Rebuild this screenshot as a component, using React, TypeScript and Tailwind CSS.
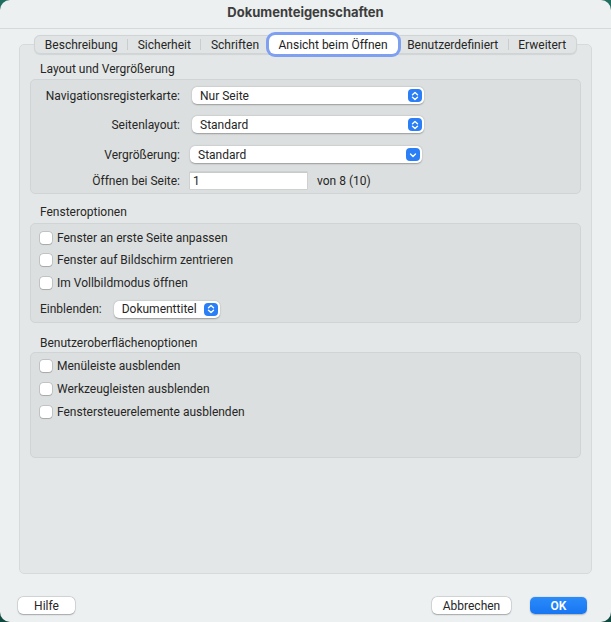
import React from "react";

const TABS = ["Beschreibung", "Sicherheit", "Schriften", "Ansicht beim Öffnen", "Benutzerdefiniert", "Erweitert"];
const ACTIVE = 3;

function UpDown() {
    return (
        <svg width="8" height="10" viewBox="0 0 8 10" fill="none" stroke="white" strokeWidth="1.4" strokeLinecap="round" strokeLinejoin="round">
            <path d="M1.5 3.8 L4 1.5 L6.5 3.8" />
            <path d="M1.5 6.2 L4 8.5 L6.5 6.2" />
        </svg>
    );
}

function Down() {
    return (
        <svg width="8" height="8" viewBox="0 0 8 8" fill="none" stroke="white" strokeWidth="1.4" strokeLinecap="round" strokeLinejoin="round">
            <path d="M1.5 3 L4 5.5 L6.5 3" />
        </svg>
    );
}

function Popup({ value, className, single }: { value: string; className: string; single?: boolean }) {
    return (
        <div className={`flex items-center justify-between h-[17px] bg-white rounded-[5px] shadow-[0_0.5px_1.5px_rgba(0,0,0,0.3)] pl-[8px] pr-[2px] ${className}`}>
            <span className="leading-none">{value}</span>
            <span className="w-[14px] h-[13px] rounded-[4px] bg-[#2a7ef6] flex items-center justify-center">
                {single ? <Down /> : <UpDown />}
            </span>
        </div>
    );
}

function Check({ label, className = "" }: { label: string; className?: string }) {
    return (
        <div className={`flex items-center h-[16px] ${className}`}>
            <span className="w-[12px] h-[12px] rounded-[3px] bg-white shadow-[0_0_0_0.5px_rgba(0,0,0,0.22),0_0.5px_1px_rgba(0,0,0,0.15)]" />
            <span className="ml-[5px]">{label}</span>
        </div>
    );
}

function SectionLabel({ text, className }: { text: string; className: string }) {
    return <div className={`h-[16px] leading-[16px] pl-[10px] ${className}`}>{text}</div>;
}

export default function App() {
    return (
        <div className="w-[611px] h-[622px] bg-gradient-to-b from-[#1f6e60] to-[#0f4a40] text-[12px] text-[#262626]" style={{ fontFamily: "Roboto, 'Noto Sans', sans-serif" }}>
            <div className="w-full h-full rounded-[10px] bg-[#ecf0f0] flex flex-col overflow-hidden">
                {/* title bar */}
                <div className="h-[29px] shrink-0 border-b border-[#d5d9d9] flex items-center justify-center pb-[2px] text-[13px] font-bold text-[#3d3d3d]" style={{ fontFamily: "Inter, sans-serif" }}>
                    Dokumenteigenschaften
                </div>

                <div className="flex flex-col items-center mt-[6px]">
                    {/* tab bar */}
                    <div className="relative z-10 flex items-center h-[19px] bg-[#e1e4e4] border border-[#d0d4d4] rounded-[6px] shadow-[0_0.5px_1px_rgba(0,0,0,0.08)]">
                        {TABS.map((t, i) => {
                            const showSep = i > 0 && i !== ACTIVE && i - 1 !== ACTIVE;
                            return (
                                <React.Fragment key={t}>
                                    {showSep && <span className="w-px h-[11px] bg-[#c9cdcd]" />}
                                    {i === ACTIVE ? (
                                        <span className="h-[19px] px-[10px] flex items-center bg-white rounded-[6px] shadow-[0_0_0_3px_#7f9ff0] text-[#1e1e1e]">
                                            {t}
                                        </span>
                                    ) : (
                                        <span className="px-[9.5px] leading-none">{t}</span>
                                    )}
                                </React.Fragment>
                            );
                        })}
                    </div>

                    {/* main panel */}
                    <div className="-mt-[10px] w-[573px] h-[530px] bg-[#e4e7e7] border border-[#d6dada] rounded-[5px] px-[10px] pt-[16px] flex flex-col">
                        <SectionLabel text="Layout und Vergrößerung" className="" />
                        <div className="mt-[2px] h-[115px] bg-[#dcdfdf] border border-[#d1d4d4] rounded-[5px] pt-[7px]">
                            <div className="flex items-center h-[17px]">
                                <span className="w-[149px] text-right">Navigationsregisterkarte:</span>
                                <Popup value="Nur Seite" className="ml-[12px] w-[232px]" />
                            </div>
                            <div className="flex items-center h-[17px] mt-[12px]">
                                <span className="w-[149px] text-right">Seitenlayout:</span>
                                <Popup value="Standard" className="ml-[12px] w-[232px]" />
                            </div>
                            <div className="flex items-center h-[17px] mt-[13px]">
                                <span className="w-[149px] text-right">Vergrößerung:</span>
                                <Popup value="Standard" className="ml-[10px] w-[232px]" single />
                            </div>
                            <div className="flex items-center h-[17px] mt-[9px]">
                                <span className="w-[149px] text-right">Öffnen bei Seite:</span>
                                <div className="ml-[10px] w-[117px] h-[17px] bg-white border-t border-[#c8cbcb] shadow-[0_0_0_0.5px_rgba(0,0,0,0.12)] flex items-center pl-[3px]">
                                    1
                                </div>
                                <span className="ml-[10px]">von 8 (10)</span>
                            </div>
                        </div>

                        <SectionLabel text="Fensteroptionen" className="mt-[10px]" />
                        <div className="mt-[3px] h-[100px] bg-[#dcdfdf] border border-[#d1d4d4] rounded-[5px] pt-[6px] pl-[9px]">
                            <Check label="Fenster an erste Seite anpassen" />
                            <Check label="Fenster auf Bildschirm zentrieren" className="mt-[6px]" />
                            <Check label="Im Vollbildmodus öffnen" className="mt-[7px]" />
                            <div className="flex items-center h-[16px] mt-[10px]">
                                <span>Einblenden:</span>
                                <Popup value="Dokumenttitel" className="ml-[12px] w-[106px] pl-[7px]" />
                            </div>
                        </div>

                        <SectionLabel text="Benutzeroberflächenoptionen" className="mt-[12px]" />
                        <div className="mt-[1px] h-[106px] bg-[#dcdfdf] border border-[#d1d4d4] rounded-[5px] pt-[5px] pl-[9px]">
                            <Check label="Menüleiste ausblenden" />
                            <Check label="Werkzeugleisten ausblenden" className="mt-[7px]" />
                            <Check label="Fenstersteuerelemente ausblenden" className="mt-[7px]" />
                        </div>
                    </div>
                </div>

                {/* footer buttons */}
                <div className="flex items-center mt-[23px] px-[18px] pr-[24px]">
                    <button className="w-[57px] h-[17px] bg-white rounded-[5px] shadow-[0_0_0_0.5px_rgba(0,0,0,0.15),0_0.5px_1.5px_rgba(0,0,0,0.25)] leading-none">
                        Hilfe
                    </button>
                    <div className="flex-1" />
                    <button className="w-[79px] h-[17px] bg-white rounded-[5px] shadow-[0_0_0_0.5px_rgba(0,0,0,0.15),0_0.5px_1.5px_rgba(0,0,0,0.25)] leading-none">
                        Abbrechen
                    </button>
                    <button className="ml-[19px] w-[57px] h-[17px] bg-gradient-to-b from-[#2a8bfa] to-[#1876f2] text-white font-semibold rounded-[5px] shadow-[0_0.5px_1.5px_rgba(0,0,0,0.25)] leading-none">
                        OK
                    </button>
                </div>
            </div>
        </div>
    );
}
